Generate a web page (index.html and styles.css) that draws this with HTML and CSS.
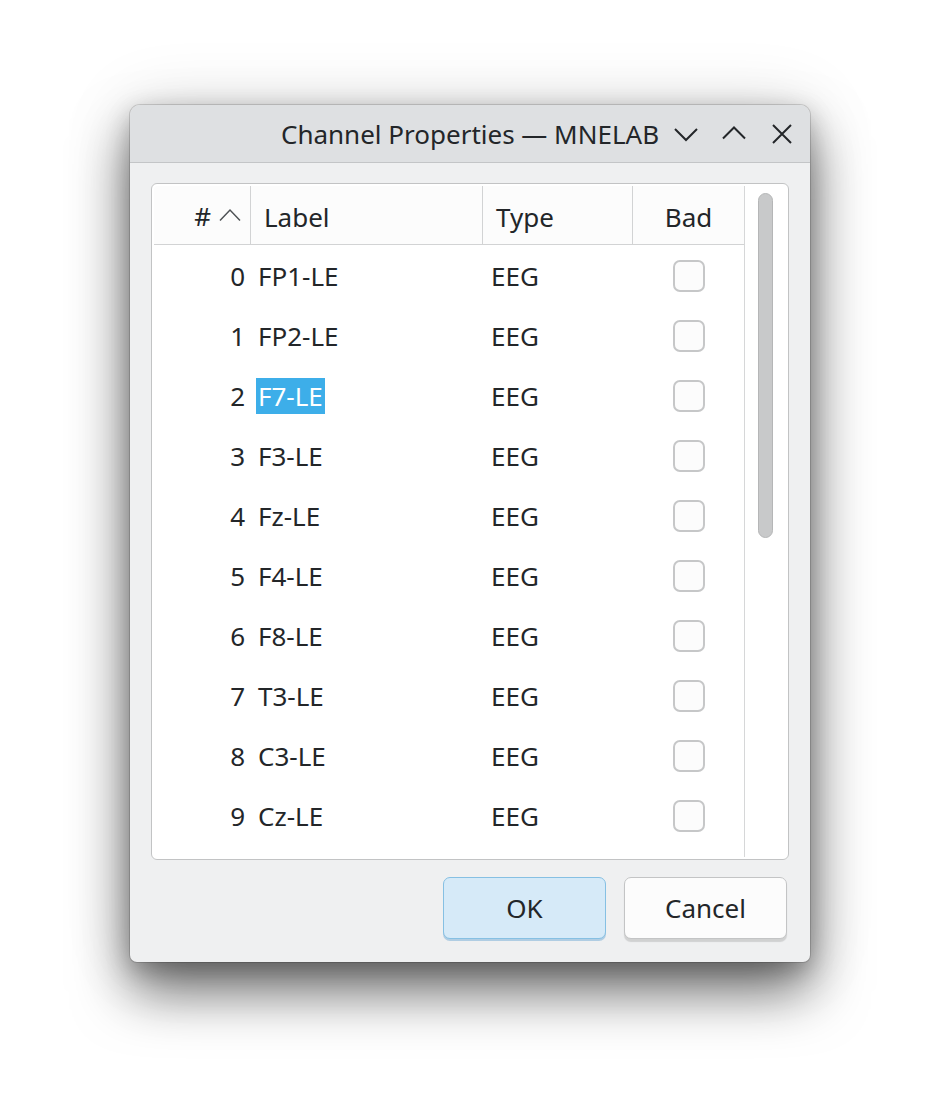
FILE: index.html
```html
<!DOCTYPE html>
<html>
<head>
<meta charset="utf-8">
<link rel="stylesheet" href="styles.css">
</head>
<body>
<div class="window">
  <div class="titlebar">
    <div class="title">Channel Properties — MNELAB</div>
    <div class="controls">
      <span class="ctl"><svg width="24" height="24" viewBox="0 0 24 24"><path d="M1 7 L12 18 L23 7" fill="none" stroke="#232629" stroke-width="2"/></svg></span>
      <span class="ctl"><svg width="24" height="24" viewBox="0 0 24 24"><path d="M1 16.5 L12 5.5 L23 16.5" fill="none" stroke="#232629" stroke-width="2"/></svg></span>
      <span class="ctl"><svg width="24" height="24" viewBox="0 0 24 24"><path d="M3 3 L21 21 M21 3 L3 21" fill="none" stroke="#232629" stroke-width="2"/></svg></span>
    </div>
  </div>
  <div class="content">
    <div class="frame">
      <div class="viewport">
        <div class="header">
          <div class="hcell hnum"><span>#</span><svg class="sort" width="22" height="14" viewBox="0 0 22 14"><path d="M1 12.5 L11 2 L21 12.5" fill="none" stroke="#4f5356" stroke-width="1.5"/></svg></div>
          <div class="hcell hlabel">Label</div>
          <div class="hcell htype">Type</div>
          <div class="hcell hbad">Bad</div>
        </div>
        <div class="rows">
          <div class="row"><div class="num">0</div><div class="label"><span class="lt">FP1-LE</span></div><div class="type">EEG</div><div class="bad"><span class="check"></span></div></div>
          <div class="row"><div class="num">1</div><div class="label"><span class="lt">FP2-LE</span></div><div class="type">EEG</div><div class="bad"><span class="check"></span></div></div>
          <div class="row"><div class="num">2</div><div class="label"><span class="lt selected">F7-LE</span></div><div class="type">EEG</div><div class="bad"><span class="check"></span></div></div>
          <div class="row"><div class="num">3</div><div class="label"><span class="lt">F3-LE</span></div><div class="type">EEG</div><div class="bad"><span class="check"></span></div></div>
          <div class="row"><div class="num">4</div><div class="label"><span class="lt">Fz-LE</span></div><div class="type">EEG</div><div class="bad"><span class="check"></span></div></div>
          <div class="row"><div class="num">5</div><div class="label"><span class="lt">F4-LE</span></div><div class="type">EEG</div><div class="bad"><span class="check"></span></div></div>
          <div class="row"><div class="num">6</div><div class="label"><span class="lt">F8-LE</span></div><div class="type">EEG</div><div class="bad"><span class="check"></span></div></div>
          <div class="row"><div class="num">7</div><div class="label"><span class="lt">T3-LE</span></div><div class="type">EEG</div><div class="bad"><span class="check"></span></div></div>
          <div class="row"><div class="num">8</div><div class="label"><span class="lt">C3-LE</span></div><div class="type">EEG</div><div class="bad"><span class="check"></span></div></div>
          <div class="row"><div class="num">9</div><div class="label"><span class="lt">Cz-LE</span></div><div class="type">EEG</div><div class="bad"><span class="check"></span></div></div>
        </div>
      </div>
      <div class="scrollbar"><div class="thumb"></div></div>
    </div>
    <div class="buttons">
      <button class="btn ok">OK</button>
      <button class="btn cancel">Cancel</button>
    </div>
  </div>
</div>
</body>
</html>
```
FILE: styles.css
```css
html, body {
  margin: 0;
  padding: 0;
  background: #ffffff;
}
body {
  padding: 105px 0 0 130px;
  font-family: "Noto Sans", "DejaVu Sans", sans-serif;
  font-size: 26px;
  color: #232629;
  width: 940px;
  height: 1116px;
  box-sizing: border-box;
  overflow: hidden;
}
.window {
  width: 680px;
  height: 857px;
  border-radius: 10px 10px 7px 7px;
  background: #eff0f1;
  box-shadow: 0 30px 55px rgba(0, 0, 0, 0.55), 0 8px 24px rgba(0, 0, 0, 0.22), 0 0 70px rgba(0, 0, 0, 0.12), 0 0 0 1px rgba(0, 0, 0, 0.14);
  display: flex;
  flex-direction: column;
  overflow: hidden;
}
.titlebar {
  height: 57px;
  border-bottom: 1px solid #c3c5c7;
  background: #dee0e2;
  display: grid;
  grid-template-columns: 1fr auto 1fr;
  align-items: center;
}
.title {
  grid-column: 2;
  line-height: 57px;
  white-space: nowrap;
  padding-top: 1px;
}
.controls {
  grid-column: 3;
  justify-self: end;
  display: flex;
  gap: 12px;
  padding-right: 10px;
}
.ctl {
  width: 36px;
  height: 36px;
  display: flex;
  align-items: center;
  justify-content: center;
}
.ctl svg { display: block; }
.content {
  flex: 1;
  display: flex;
  flex-direction: column;
  padding: 20px 21px 0 21px;
}
.frame {
  height: 677px;
  box-sizing: border-box;
  border: 1px solid #c2c3c4;
  border-radius: 6px;
  background: #ffffff;
  padding: 2px 0 2px 2px;
  display: flex;
}
.viewport {
  width: 591px;
  box-sizing: border-box;
  border-right: 1px solid #d6d7d8;
  overflow: hidden;
  border-radius: 4px 0 0 4px;
}
.header {
  display: grid;
  grid-template-columns: 97px 232px 150px 111px;
  background: #fcfcfc;
}
.hcell {
  height: 59px;
  line-height: 59px;
  padding-top: 2px;
  box-sizing: border-box;
  border-bottom: 1px solid #d2d3d4;
  white-space: nowrap;
}
.hnum, .hlabel, .htype {
  border-right: 1px solid #d2d3d4;
}
.hnum {
  display: flex;
  align-items: center;
  justify-content: flex-end;
  gap: 8px;
  padding-right: 9px;
}
.hnum .sort { display: block; margin-top: -2px; }
.hlabel { padding-left: 13px; }
.htype { padding-left: 13px; }
.hbad { text-align: center; }
.row {
  display: grid;
  grid-template-columns: 97px 232px 150px 111px;
  height: 60px;
  line-height: 60px;
}
.row:first-child { margin-top: 1px; }
.num {
  text-align: right;
  padding-right: 6px;
}
.label {
  padding-left: 5px;
}
.lt {
  display: inline-block;
  padding: 0 2px;
  line-height: 36px;
}
.lt.selected {
  background: #3daee9;
  color: #ffffff;
}
.type {
  padding-left: 8px;
}
.bad {
  display: flex;
  align-items: center;
  justify-content: center;
}
.check {
  width: 32px;
  height: 32px;
  box-sizing: border-box;
  border: 2px solid #c6c7c8;
  border-radius: 7px;
  background: #fcfcfc;
}
.scrollbar {
  flex: 1;
  padding: 7px 0 0 13px;
}
.thumb {
  width: 15px;
  height: 345px;
  box-sizing: border-box;
  border: 1.5px solid #b5b6b7;
  border-radius: 8px;
  background: #c8c9ca;
}
.buttons {
  display: flex;
  justify-content: flex-end;
  gap: 18px;
  padding: 17px 2px 0 0;
}
.btn {
  width: 163px;
  height: 62px;
  font-family: "Noto Sans", "DejaVu Sans", sans-serif;
  font-size: 26px;
  color: #232629;
  border-radius: 7px;
  padding: 0;
  margin: 0;
}
.ok {
  background: #d6eaf8;
  border: 1.5px solid #86c0e3;
  box-shadow: 0 2px 0 rgba(60, 140, 200, 0.35);
}
.cancel {
  background: #fcfcfc;
  border: 1.5px solid #c3c4c5;
  box-shadow: 0 3px 1px rgba(0, 0, 0, 0.13);
}
```
